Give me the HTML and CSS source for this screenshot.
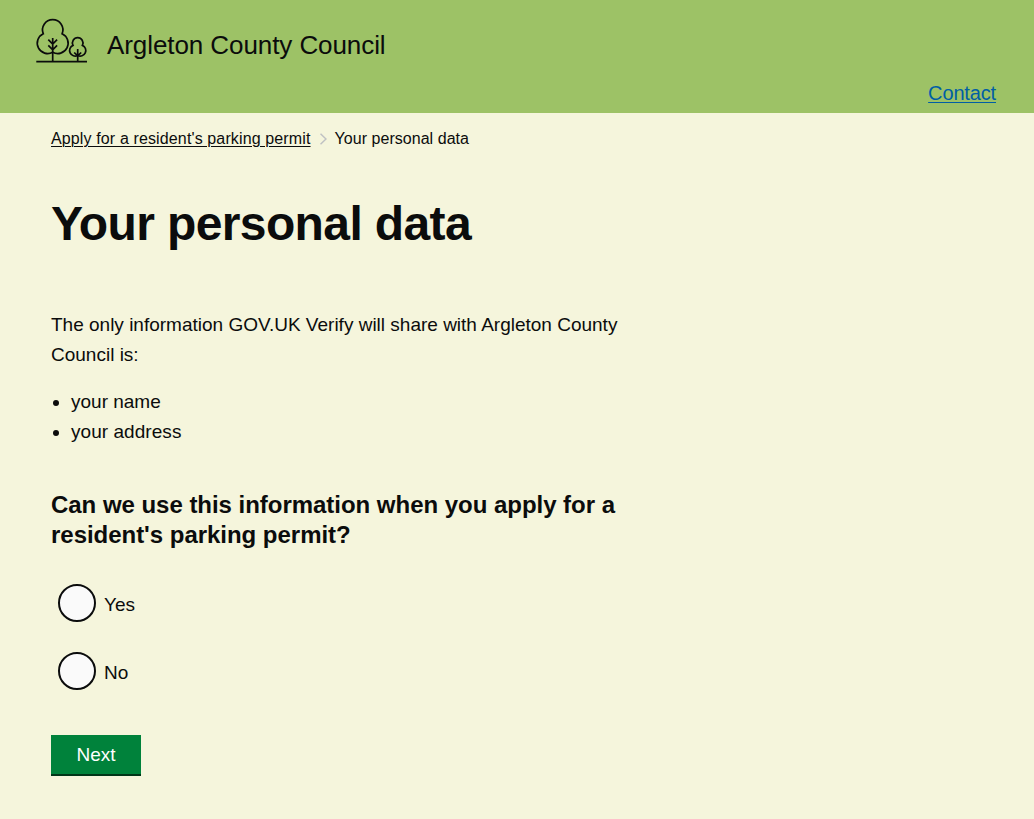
FILE: index.html
```html
<!DOCTYPE html>
<html lang="en">
<head>
<meta charset="utf-8">
<title>Your personal data</title>
<link rel="stylesheet" href="styles.css">
</head>
<body>
<header class="header">
  <div class="brand">
    <svg class="logo" width="52" height="46" viewBox="0 0 52 46" fill="none" stroke="#0b0c0c" stroke-width="1.7">
      <path d="M.3 43.6H51M16.7 43.5V20M12.3 21.6l4.4 4.4 4.4-4.4M12.3 27.4l4.4 4.4 4.4-4.4M41.7 43.5V31M38.2 34.5l3.5 3.4 3.5-3.4"/>
      <path d="M16.7 34.2A10.34 10.34 0 1 1 7.3 15.8A10.2 10.2 0 1 1 26.1 15.8A10.34 10.34 0 1 1 16.7 34.2"/>
      <path d="M41.7 37.4A5.53 5.53 0 1 1 37 27.4A5.3 5.3 0 1 1 46.4 27.4A5.53 5.53 0 1 1 41.7 37.4"/>
    </svg>
    <span class="brand-name">Argleton County Council</span>
  </div>
  <nav class="nav"><a class="nav-link" href="#">Contact</a></nav>
</header>
<main class="main">
  <nav class="crumbs">
    <a class="crumb-link" href="#">Apply for a resident's parking permit</a>
    <svg class="chevron" width="7" height="12" viewBox="0 0 7 12" fill="none" stroke="#bfc1c3" stroke-width="1.5"><path d="M.5 .7 6 6 .5 11.3"/></svg>
    <span class="crumb-current">Your personal data</span>
  </nav>
  <h1 class="title">Your personal data</h1>
  <p class="intro"><span class="intro-line">The only information GOV.UK Verify will share with Argleton County</span> Council is:</p>
  <ul class="list">
    <li class="item"><span class="item-name">your name</span></li>
    <li class="item"><span class="item-address">your address</span></li>
  </ul>
  <form>
    <h2 class="question">Can we use this information when you apply for a<br>resident's parking permit?</h2>
    <label class="choice"><input class="radio" type="radio" name="consent"><span>Yes</span></label>
    <label class="choice"><input class="radio" type="radio" name="consent"><span>No</span></label>
    <button class="button" type="button">Next</button>
  </form>
</main>
</body>
</html>
```
FILE: styles.css
```css
body {
  margin: 0;
  background: #f5f5dc;
  color: #0b0c0c;
  font: 19px/30px "Liberation Sans", Arial, sans-serif;
}
.header {
  box-sizing: border-box;
  height: 113px;
  padding: 18px 38px 0 36px;
  background: #9dc266;
}
.brand { display: flex; height: 46px; }
.logo { flex: none; overflow: visible; }
.brand-name {
  margin: 12px 0 0 19px;
  font-size: 26px;
  letter-spacing: -0.08px;
}
.nav { display: flex; justify-content: flex-end; padding-top: 14px; }
.nav-link {
  color: #005ea5;
  font-size: 20px;
  letter-spacing: -0.15px;
  text-underline-offset: 2px;
  text-decoration-thickness: 1px;
}
.main { padding: 16px 51px 0; }
.crumbs { display: flex; align-items: center; height: 20px; font-size: 16px; line-height: 20px; letter-spacing: 0.13px; }
.crumb-link {
  color: #0b0c0c;
  text-underline-offset: 2px;
  text-decoration-thickness: 1px;
}
.crumb-current { letter-spacing: 0.04px; }
.chevron { margin: 0 8px 0 9px; }
.title {
  margin: 50px 0 0;
  font-size: 48px;
  line-height: 50px;
  letter-spacing: -0.62px;
}
.intro { width: 600px; margin: 61px 0 0; }
.intro-line { white-space: nowrap; }
.list { margin: 17px 0 0; padding: 0 0 0 20px; }
.item-address { letter-spacing: 0.05px; }
.question {
  margin: 43px 0 0;
  font-size: 24px;
  line-height: 30px;
  letter-spacing: -0.03px;
}
.choice {
  display: flex;
  align-items: center;
  width: 120px;
  height: 38px;
  margin: 34px 0 0 7px;
}
.choice + .choice { margin-top: 30px; }
.choice span { margin: 3px 0 0 8px; }
.radio {
  appearance: none;
  box-sizing: border-box;
  width: 38px;
  height: 38px;
  margin: 0;
  border: 2px solid #0b0c0c;
  border-radius: 50%;
  background: #fafafa;
}
.button {
  display: block;
  width: 90px;
  height: 41px;
  margin-top: 45px;
  padding: 0;
  border: 0;
  border-bottom: 2px solid #003618;
  background: #00823b;
  color: #fff;
  font: 19px/39px "Liberation Sans", Arial, sans-serif;
}
```
